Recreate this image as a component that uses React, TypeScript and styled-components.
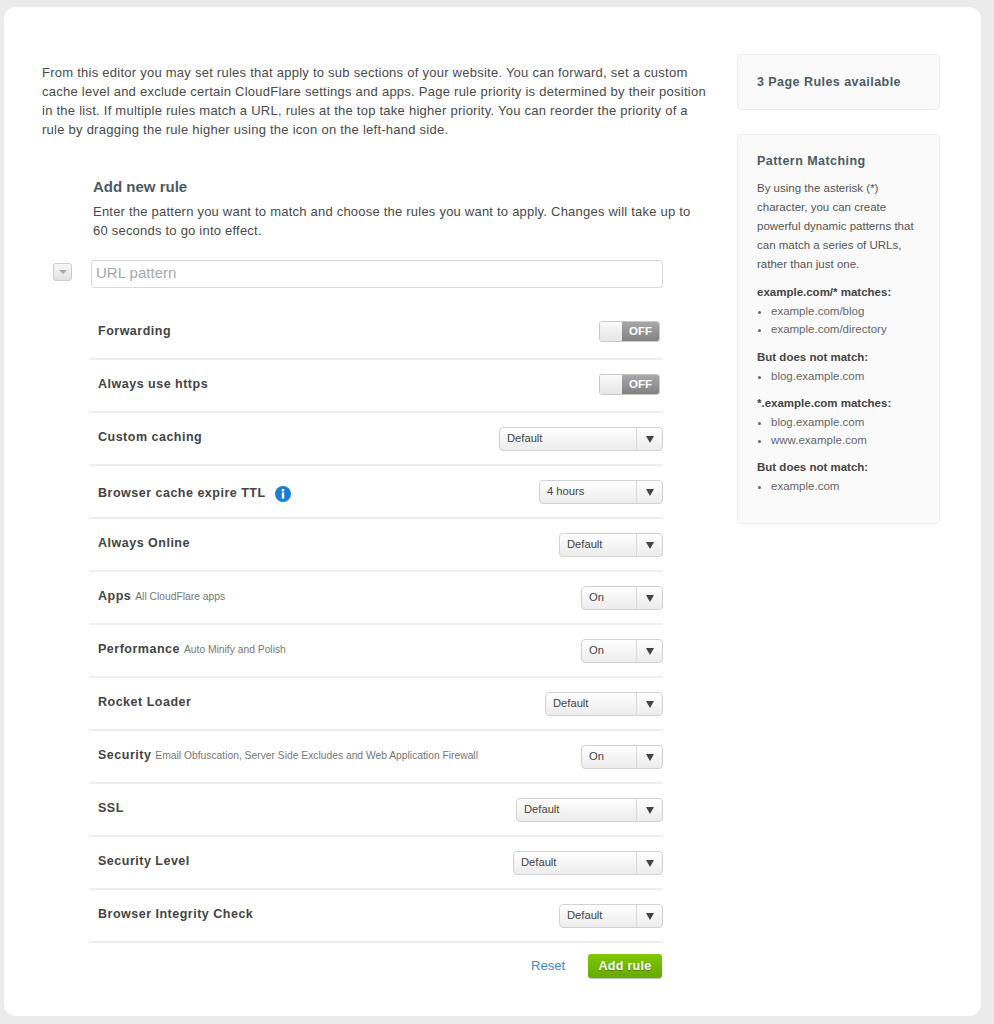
import styled, { createGlobalStyle } from 'styled-components'

const GlobalStyle = createGlobalStyle`
  html, body {
    margin: 0;
    padding: 0;
    background: #ebebeb;
    font-family: "Liberation Sans", Arial, sans-serif;
    color: #4a4a4a;
  }
`

const Page = styled.div`
  width: 994px;
  height: 1024px;
  box-sizing: border-box;
  padding: 7px 13px 8px 4px;
  overflow: hidden;
`

const Card = styled.div`
  height: 1009px;
  box-sizing: border-box;
  background: #fff;
  border-radius: 12px;
  padding: 47px 41px 0 38px;
  display: flex;
  justify-content: space-between;
`

const Main = styled.div`
  width: 666px;
`

const Intro = styled.p`
  margin: 9px 0 0;
  font-size: 13px;
  line-height: 19px;
  letter-spacing: 0.25px;
  color: #4a4a4a;
`

const Editor = styled.div`
  margin: 38px 0 0 47px;
  width: 574px;
`

const Title = styled.h3`
  margin: 1px 0 -1px 4px;
  font-size: 15px;
  line-height: 20px;
  font-weight: bold;
  color: #4b5a66;
`

const Lead = styled.p`
  margin: 6px 0 0 4px;
  width: 610px;
  font-size: 13px;
  line-height: 19px;
  letter-spacing: 0.22px;
`

const PatternRow = styled.div`
  position: relative;
  margin-top: 20px;
  padding-left: 2px;
`

const Handle = styled.div`
  position: absolute;
  left: -36px;
  top: 3px;
  width: 19px;
  height: 18px;
  box-sizing: border-box;
  border: 1px solid #cccccc;
  border-radius: 3px;
  background: linear-gradient(#f7f7f7, #e2e2e2);
  display: flex;
  align-items: center;
  justify-content: center;

  &::after {
    content: '';
    border-left: 4px solid transparent;
    border-right: 4px solid transparent;
    border-top: 4px solid #aaa;
  }
`

const PatternInput = styled.input`
  display: block;
  width: 572px;
  height: 28px;
  box-sizing: border-box;
  border: 1px solid #d8d8d8;
  border-radius: 3px;
  padding: 0 4px 3px;
  font-family: inherit;
  font-size: 15px;
  outline: none;

  &::placeholder {
    color: #a8a8a8;
    opacity: 1;
  }
`

const Rules = styled.div`
  margin-top: 19px;
`

const Rule = styled.div`
  height: 53px;
  box-sizing: border-box;
  border-bottom: 2px solid #eeeeee;
  padding-left: 9px;
  display: flex;
  align-items: center;
  justify-content: space-between;
`

const RuleLabel = styled.div<{ $low?: boolean }>`
  display: flex;
  align-items: baseline;
  font-size: 12.5px;
  font-weight: bold;
  letter-spacing: 0.5px;
  color: #444;
  margin-top: ${(p) => (p.$low ? '4px' : '-4px')};
`

const RuleHint = styled.span`
  margin-left: 4px;
  font-size: 10.3px;
  font-weight: normal;
  letter-spacing: 0;
  color: #777;
`

const InfoIcon = styled.svg`
  width: 16px;
  height: 16px;
  margin-left: 9px;
  align-self: center;
`

const Toggle = styled.div`
  width: 61px;
  height: 21px;
  margin-right: 3px;
  margin-top: -2px;
  box-sizing: border-box;
  border: 1px solid #c8c8c8;
  border-radius: 3px;
  display: flex;
  overflow: hidden;
`

const ToggleKnob = styled.div`
  width: 22px;
  background: linear-gradient(#fafafa, #e6e6e6);
`

const ToggleState = styled.div`
  flex: 1;
  background: linear-gradient(#a8a8a8, #828282);
  color: #fff;
  font-size: 11.5px;
  font-weight: bold;
  line-height: 19px;
  text-align: center;
`

const Select = styled.div<{ $width: number }>`
  width: ${(p) => p.$width}px;
  height: 24px;
  box-sizing: border-box;
  border: 1px solid #d2d2d2;
  border-radius: 4px;
  background: linear-gradient(#ffffff, #ececec);
  display: flex;
`

const SelectValue = styled.div`
  flex: 1;
  padding-left: 7px;
  font-size: 11.2px;
  line-height: 20px;
  color: #444;
`

const SelectArrow = styled.div`
  width: 25px;
  border-left: 1px solid #d8d8d8;
  display: flex;
  align-items: center;
  justify-content: center;

  &::after {
    content: '';
    border-left: 4.5px solid transparent;
    border-right: 4.5px solid transparent;
    border-top: 7px solid #444;
    margin-top: 1px;
  }
`

const Actions = styled.div`
  margin-top: 11px;
  padding-right: 1px;
  display: flex;
  justify-content: flex-end;
  align-items: center;
  gap: 23px;
`

const ResetLink = styled.a`
  font-size: 13px;
  color: #3b8ad0;
  margin-top: -1px;
`

const AddButton = styled.button`
  width: 74px;
  height: 24px;
  border: none;
  border-radius: 3px;
  background: linear-gradient(#7fc900, #66a800);
  box-shadow: 0 1px 1px rgba(0, 0, 0, 0.25);
  color: #fff;
  font-family: inherit;
  font-size: 12.5px;
  font-weight: bold;
  letter-spacing: 0.3px;
  padding: 0;
  text-shadow: 0 1px 1px rgba(0, 0, 0, 0.3);
`

const Sidebar = styled.div`
  width: 203px;
  display: flex;
  flex-direction: column;
  gap: 24px;
`

const Panel = styled.div<{ $height: number; $top: number }>`
  height: ${(p) => p.$height}px;
  box-sizing: border-box;
  background: #fafafa;
  border: 1px solid #eeeeee;
  border-radius: 5px;
  padding: ${(p) => p.$top}px 19px 0;
`

const PanelHeading = styled.div`
  font-size: 12.5px;
  line-height: 17px;
  font-weight: bold;
  letter-spacing: 0.45px;
  color: #4b5a66;
`

const PanelText = styled.p`
  margin: 9px 0 0;
  font-size: 11.5px;
  line-height: 19px;
  color: #555;
`

const MatchTitle = styled.div`
  margin-top: 9.3px;
  font-size: 11.5px;
  line-height: 19px;
  font-weight: bold;
  color: #444;
`

const MatchList = styled.ul`
  margin: 0;
  padding: 0 0 0 14px;
  font-size: 11.5px;
  line-height: 18px;
  color: #666;
`

type RuleData = {
  label: string
  hint?: string
  info?: boolean
  toggle?: boolean
  value?: string
  width?: number
}

const rules: RuleData[] = [
  { label: 'Forwarding', toggle: true },
  { label: 'Always use https', toggle: true },
  { label: 'Custom caching', value: 'Default', width: 164 },
  { label: 'Browser cache expire TTL', info: true, value: '4 hours', width: 124 },
  { label: 'Always Online', value: 'Default', width: 104 },
  { label: 'Apps', hint: 'All CloudFlare apps', value: 'On', width: 82 },
  { label: 'Performance', hint: 'Auto Minify and Polish', value: 'On', width: 82 },
  { label: 'Rocket Loader', value: 'Default', width: 118 },
  {
    label: 'Security',
    hint: 'Email Obfuscation, Server Side Excludes and Web Application Firewall',
    value: 'On',
    width: 82,
  },
  { label: 'SSL', value: 'Default', width: 147 },
  { label: 'Security Level', value: 'Default', width: 150 },
  { label: 'Browser Integrity Check', value: 'Default', width: 104 },
]

const matches = [
  { title: 'example.com/* matches:', items: ['example.com/blog', 'example.com/directory'] },
  { title: 'But does not match:', items: ['blog.example.com'] },
  { title: '*.example.com matches:', items: ['blog.example.com', 'www.example.com'] },
  { title: 'But does not match:', items: ['example.com'] },
]

const App = () => (
  <Page>
    <GlobalStyle />
    <Card>
      <Main>
        <Intro>
          From this editor you may set rules that apply to sub sections of your website. You can
          forward, set a custom cache level and exclude certain CloudFlare settings and apps. Page
          rule priority is determined by their position in the list. If multiple rules match a URL,
          rules at the top take higher priority. You can reorder the priority of a rule by dragging
          the rule higher using the icon on the left-hand side.
        </Intro>
        <Editor>
          <Title>Add new rule</Title>
          <Lead>
            Enter the pattern you want to match and choose the rules you want to apply. Changes will
            take up to 60 seconds to go into effect.
          </Lead>
          <PatternRow>
            <Handle />
            <PatternInput placeholder="URL pattern" />
          </PatternRow>
          <Rules>
            {rules.map((rule) => (
              <Rule key={rule.label}>
                <RuleLabel $low={rule.info}>
                  {rule.label}
                  {rule.hint && <RuleHint>{rule.hint}</RuleHint>}
                  {rule.info && (
                    <InfoIcon viewBox="0 0 16 16">
                      <circle cx="8" cy="8" r="8" fill="#1a7fd4" />
                      <rect x="6.8" y="3" width="2.4" height="2.4" fill="#fff" />
                      <rect x="6.8" y="6.4" width="2.4" height="6.2" fill="#fff" />
                    </InfoIcon>
                  )}
                </RuleLabel>
                {rule.toggle ? (
                  <Toggle>
                    <ToggleKnob />
                    <ToggleState>OFF</ToggleState>
                  </Toggle>
                ) : (
                  <Select $width={rule.width ?? 104}>
                    <SelectValue>{rule.value}</SelectValue>
                    <SelectArrow />
                  </Select>
                )}
              </Rule>
            ))}
          </Rules>
          <Actions>
            <ResetLink>Reset</ResetLink>
            <AddButton>Add rule</AddButton>
          </Actions>
        </Editor>
      </Main>
      <Sidebar>
        <Panel $height={56} $top={19}>
          <PanelHeading>3 Page Rules available</PanelHeading>
        </Panel>
        <Panel $height={390} $top={18}>
          <PanelHeading>Pattern Matching</PanelHeading>
          <PanelText>
            By using the asterisk (*) character, you can create powerful dynamic patterns that can
            match a series of URLs, rather than just one.
          </PanelText>
          {matches.map((group, i) => (
            <div key={i}>
              <MatchTitle>{group.title}</MatchTitle>
              <MatchList>
                {group.items.map((item) => (
                  <li key={item}>{item}</li>
                ))}
              </MatchList>
            </div>
          ))}
        </Panel>
      </Sidebar>
    </Card>
  </Page>
)

export default App
